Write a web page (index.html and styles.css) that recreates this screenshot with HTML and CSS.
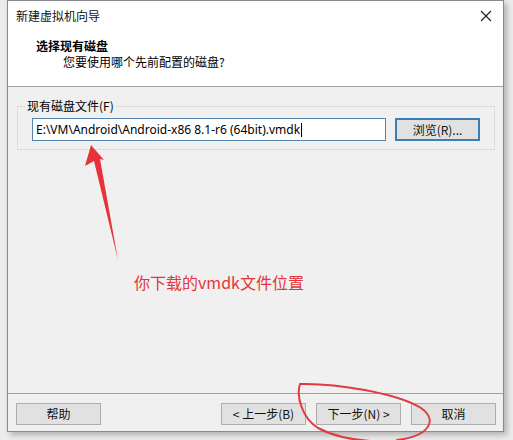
FILE: index.html
```html
<!DOCTYPE html>
<html lang="zh-CN">
<head>
<meta charset="utf-8">
<title>新建虚拟机向导</title>
<link rel="stylesheet" href="styles.css">
</head>
<body>
<div class="window">
  <div class="titlebar">
    <span class="title">新建虚拟机向导</span>
    <svg class="close" width="12" height="12" viewBox="0 0 12 12"><path d="M1 1L11 11M11 1L1 11" stroke="#222" stroke-width="1.2" fill="none"/></svg>
  </div>
  <div class="header">
    <div class="h-title">选择现有磁盘</div>
    <div class="h-sub">您要使用哪个先前配置的磁盘?</div>
  </div>
  <div class="content">
    <fieldset class="group">
      <legend class="group-label">现有磁盘文件(F)</legend>
      <div class="row">
        <div class="input">E:\VM\Android\Android-x86 8.1-r6 (64bit).vmdk<span class="caret"></span></div>
        <button class="btn btn-browse">浏览(R)...</button>
      </div>
    </fieldset>
  </div>
  <div class="footer">
    <button class="btn">帮助</button>
    <div class="nav">
      <button class="btn">&lt; 上一步(B)</button>
      <button class="btn">下一步(N) &gt;</button>
      <button class="btn">取消</button>
    </div>
  </div>
</div>
<svg class="marks" width="513" height="440" viewBox="0 0 513 440">
  <path d="M91 145 L85 166 L94 161 L118 260 L100 159 L104 160 Z" fill="#e8323a"/>
  <path d="M300 384 C335 383 397 393 421 408 C438 420 430 436 397 440 M300 384 C296 396 302 418 318 428 C335 437 355 440 370 441" stroke="#e23a40" stroke-width="2" fill="none" stroke-linecap="round"/>
</svg>
<div class="note">你下载的vmdk文件位置</div>
</body>
</html>
```

FILE: styles.css
```css
html, body {
  margin: 0;
  padding: 0;
}
body {
  width: 513px;
  height: 440px;
  background: #ececec;
  font-family: "Noto Sans", "Noto Sans CJK SC", sans-serif;
  font-size: 12px;
  color: #000;
  overflow: hidden;
  position: relative;
}
.window {
  margin-left: 7px;
  width: 495px;
  height: 430px;
  border: 1px solid #8a8a8a;
  background: #f0f0f0;
  display: flex;
  flex-direction: column;
  box-shadow: 3px 3px 6px rgba(0,0,0,0.25);
}
.titlebar {
  height: 30px;
  background: #fff;
  display: flex;
  align-items: center;
  justify-content: space-between;
  padding: 0 8px 0 8px;
}
.title {
  font-family: "Noto Sans CJK SC", sans-serif;
  font-size: 12px;
  line-height: 30px;
  color: #111;
}
.close {
  margin-right: 3px;
  margin-top: -1px;
}
.header {
  background: #fff;
  height: 56px;
  box-sizing: border-box;
  padding: 7px 0 0 28px;
  border-bottom: 1px solid #a0a0a0;
}
.h-title {
  font-family: "Noto Sans CJK SC", sans-serif;
  font-weight: bold;
  line-height: 16px;
}
.h-sub {
  font-family: "Noto Sans CJK SC", sans-serif;
  line-height: 16px;
  padding-left: 27px;
}
.content {
  flex: 1;
  padding-top: 11px;
}
.group {
  margin: 0 8px 0 9px;
  padding: 4px 13px 8px 14px;
  border: 1px solid #dcdcdc;
  min-width: 0;
}
.group-label {
  font-family: "Noto Sans CJK SC", sans-serif;
  line-height: 16px;
  padding: 0 1px;
  margin-left: -6px;
}
.row {
  display: flex;
  gap: 9px;
}
.input {
  width: 354px;
  height: 23px;
  box-sizing: border-box;
  border: 1px solid #5286b0;
  background: #fff;
  font-family: "Noto Sans", sans-serif;
  font-size: 12px;
  line-height: 21px;
  padding-left: 3px;
  white-space: nowrap;
  display: flex;
  align-items: center;
}
.caret {
  display: inline-block;
  width: 1px;
  height: 14px;
  background: #000;
  margin-left: 1px;
}
.btn {
  width: 85px;
  height: 22px;
  box-sizing: border-box;
  background: #e1e1e1;
  border: 1px solid #adadad;
  font-family: "Noto Sans CJK SC", "Noto Sans", sans-serif;
  font-size: 12px;
  color: #111;
  padding: 0;
  line-height: 20px;
}
.btn-browse {
  height: 23px;
  border: 2px solid #3d7fb3;
}
.footer {
  height: 38px;
  box-sizing: border-box;
  border-top: 1px solid #a0a0a0;
  padding: 9px 7px 0 8px;
  display: flex;
  justify-content: space-between;
  align-items: flex-start;
}
.nav {
  display: flex;
  gap: 10px;
}
.marks {
  position: absolute;
  left: 0;
  top: 0;
  pointer-events: none;
}
.note {
  position: absolute;
  left: 134px;
  top: 271px;
  font-family: "Noto Sans CJK SC", sans-serif;
  font-size: 16px;
  line-height: 22px;
  color: #e4343c;
  white-space: nowrap;
}
```
